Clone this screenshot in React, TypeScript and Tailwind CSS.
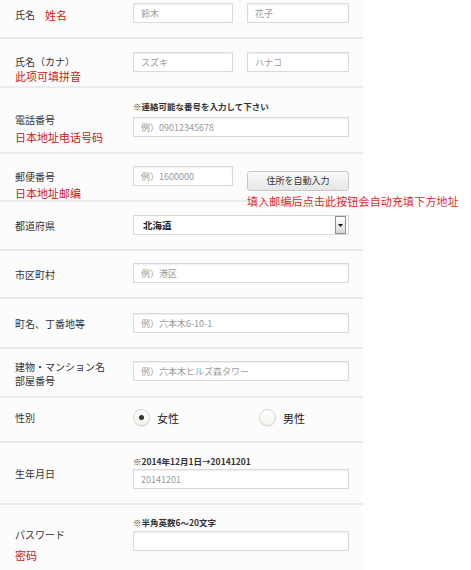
import React from "react";

const JP = { fontFamily: '"Noto Sans CJK JP", "Noto Sans CJK SC", sans-serif' };
const SC = { fontFamily: '"Noto Sans CJK SC", "Noto Sans CJK JP", sans-serif' };

function TextInput(props: { placeholder?: string; className?: string }) {
  return (
    <input
      type="text"
      placeholder={props.placeholder}
      className={
        "block h-[20px] border border-[#dadada] bg-white px-[7px] text-[9px] text-[#333] placeholder:text-[#9a9a9a] shadow-[inset_0_1px_2px_rgba(0,0,0,0.07)] outline-none " +
        (props.className ?? "w-full")
      }
      style={JP}
    />
  );
}

function Red(props: { children: React.ReactNode; className?: string }) {
  return (
    <div
      className={"text-[11px] leading-[14px] text-[#c92020] " + (props.className ?? "")}
      style={SC}>
      {props.children}
    </div>
  );
}

function Label(props: { children: React.ReactNode }) {
  return (
    <div className="text-[10px] leading-[14px] text-[#333]" style={JP}>
      {props.children}
    </div>
  );
}

function Note(props: { children: React.ReactNode }) {
  return (
    <div className="text-[8.5px] leading-[12px] font-bold text-[#333] whitespace-nowrap" style={JP}>
      {props.children}
    </div>
  );
}

function Radio(props: { checked?: boolean; label: string }) {
  return (
    <div className="flex h-[17px] items-center gap-[7px]">
      <div className="flex h-[17px] w-[17px] shrink-0 items-center justify-center rounded-full border border-[#d4d4d4] bg-gradient-to-b from-white to-[#f4f4ec] shadow-[0_1px_1px_rgba(0,0,0,0.08)]">
        {props.checked ? <div className="h-[5px] w-[5px] rounded-full bg-[#333]" /> : null}
      </div>
      <div className="text-[11px] leading-[14px] text-[#222] whitespace-nowrap" style={JP}>
        {props.label}
      </div>
    </div>
  );
}

export default function App() {
  return (
    <div className="min-h-[570px] w-[471px] overflow-hidden bg-white">
      <div className="w-[363px] bg-[#fcfcfc]">
        {/* 氏名 */}
        <div className="flex h-[39px] border-b-2 border-[#ebebeb]">
          <div className="w-[133px] shrink-0 pl-[15px] pt-[8px] flex items-center gap-[10px] self-start">
            <Label>氏名</Label>
            <Red>姓名</Red>
          </div>
          <div className="flex flex-1 gap-[14px] pr-[14px] pt-[3px]">
            <TextInput placeholder="鈴木" className="w-[100px]" />
            <TextInput placeholder="花子" className="w-[102px]" />
          </div>
        </div>

        {/* 氏名（カナ） */}
        <div className="flex h-[49px] border-b-2 border-[#ebebeb]">
          <div className="w-[133px] shrink-0 pl-[15px] pt-[16px]">
            <Label>氏名（カナ）</Label>
            <Red>此项可填拼音</Red>
          </div>
          <div className="flex flex-1 gap-[14px] pr-[14px] pt-[13px]">
            <TextInput placeholder="スズキ" className="w-[100px]" />
            <TextInput placeholder="ハナコ" className="w-[102px]" />
          </div>
        </div>

        {/* 電話番号 */}
        <div className="flex h-[66px] border-b-2 border-[#ebebeb]">
          <div className="w-[133px] shrink-0 pl-[15px] pt-[25px]">
            <Label>電話番号</Label>
            <Red className="mt-[3px]">日本地址电话号码</Red>
          </div>
          <div className="flex-1 pr-[14px] pt-[12px]">
            <Note>※連絡可能な番号を入力して下さい</Note>
            <div className="mt-[5px]">
              <TextInput placeholder="例）09012345678" />
            </div>
          </div>
        </div>

        {/* 郵便番号 */}
        <div className="flex h-[48px] border-b-2 border-[#ebebeb]">
          <div className="w-[133px] shrink-0 pl-[15px] pt-[16px]">
            <Label>郵便番号</Label>
            <Red className="mt-[2px]">日本地址邮编</Red>
          </div>
          <div className="flex flex-1 gap-[14px] pr-[14px] pt-[12px]">
            <TextInput placeholder="例）1600000" className="w-[100px]" />
            <div className="w-[102px]">
              <button
                type="button"
                className="h-[20px] w-full rounded-[3px] border border-[#c8c8c8] bg-gradient-to-b from-[#fafafa] to-[#e6e6e6] text-[9px] text-[#333]"
                style={JP}>
                住所を自動入力
              </button>
              <div
                className="mt-[3px] w-[214px] whitespace-nowrap text-[11px] leading-[14px] tracking-[0.15px] text-[#dd2a2a]"
                style={SC}>
                填入邮编后点击此按钮会自动充填下方地址
              </div>
            </div>
          </div>
        </div>

        {/* 都道府県 */}
        <div className="flex h-[49px] border-b-2 border-[#ebebeb]">
          <div className="w-[133px] shrink-0 pl-[15px] pt-[17px]">
            <Label>都道府県</Label>
          </div>
          <div className="flex-1 pr-[14px] pt-[13px]">
            <div className="flex h-[20px] items-center justify-between border border-[#dadada] bg-white pl-[9px] pr-[2px]">
              <span className="text-[9.5px] font-bold text-[#222]" style={JP}>
                北海道
              </span>
              <span className="flex h-[18px] w-[11px] items-center justify-center border border-[#8f8f8f] bg-gradient-to-b from-white to-[#d8d8d8]">
                <svg width="5" height="3" viewBox="0 0 5 3">
                  <path d="M0 0h5L2.5 3z" fill="#111" />
                </svg>
              </span>
            </div>
          </div>
        </div>

        {/* 市区町村 */}
        <div className="flex h-[48px] border-b-2 border-[#ebebeb]">
          <div className="w-[133px] shrink-0 pl-[15px] pt-[17px]">
            <Label>市区町村</Label>
          </div>
          <div className="flex-1 pr-[14px] pt-[12px]">
            <TextInput placeholder="例）港区" />
          </div>
        </div>

        {/* 町名、丁番地等 */}
        <div className="flex h-[50px] border-b-2 border-[#ebebeb]">
          <div className="w-[133px] shrink-0 pl-[15px] pt-[18px]">
            <Label>町名、丁番地等</Label>
          </div>
          <div className="flex-1 pr-[14px] pt-[14px]">
            <TextInput placeholder="例）六本木6-10-1" />
          </div>
        </div>

        {/* 建物・マンション名 */}
        <div className="flex h-[49px] border-b-2 border-[#ebebeb]">
          <div className="w-[133px] shrink-0 pl-[15px] pt-[11px]">
            <Label>建物・マンション名</Label>
            <Label>部屋番号</Label>
          </div>
          <div className="flex-1 pr-[14px] pt-[12px]">
            <TextInput placeholder="例）六本木ヒルズ森タワー" />
          </div>
        </div>

        {/* 性別 */}
        <div className="flex h-[45px] border-b-2 border-[#ebebeb]">
          <div className="w-[133px] shrink-0 pl-[15px] pt-[13px]">
            <Label>性別</Label>
          </div>
          <div className="grid flex-1 grid-cols-[126px_1fr] items-center self-start pr-[14px] pt-[11px]">
            <Radio checked label="女性" />
            <Radio label="男性" />
          </div>
        </div>

        {/* 生年月日 */}
        <div className="flex h-[62px] border-b-2 border-[#ebebeb]">
          <div className="w-[133px] shrink-0 pl-[15px] pt-[24px]">
            <Label>生年月日</Label>
          </div>
          <div className="flex-1 pr-[14px] pt-[12px]">
            <Note>※2014年12月1日→20141201</Note>
            <div className="mt-[2px]">
              <TextInput placeholder="20141201" />
            </div>
          </div>
        </div>

        {/* パスワード */}
        <div className="flex h-[66px]">
          <div className="w-[133px] shrink-0 pl-[15px] pt-[23px]">
            <Label>パスワード</Label>
            <Red className="mt-[6px]">密码</Red>
          </div>
          <div className="flex-1 pr-[14px] pt-[11px]">
            <Note>※半角英数6～20文字</Note>
            <div className="mt-[3px]">
              <TextInput />
            </div>
          </div>
        </div>
      </div>
    </div>
  );
}
